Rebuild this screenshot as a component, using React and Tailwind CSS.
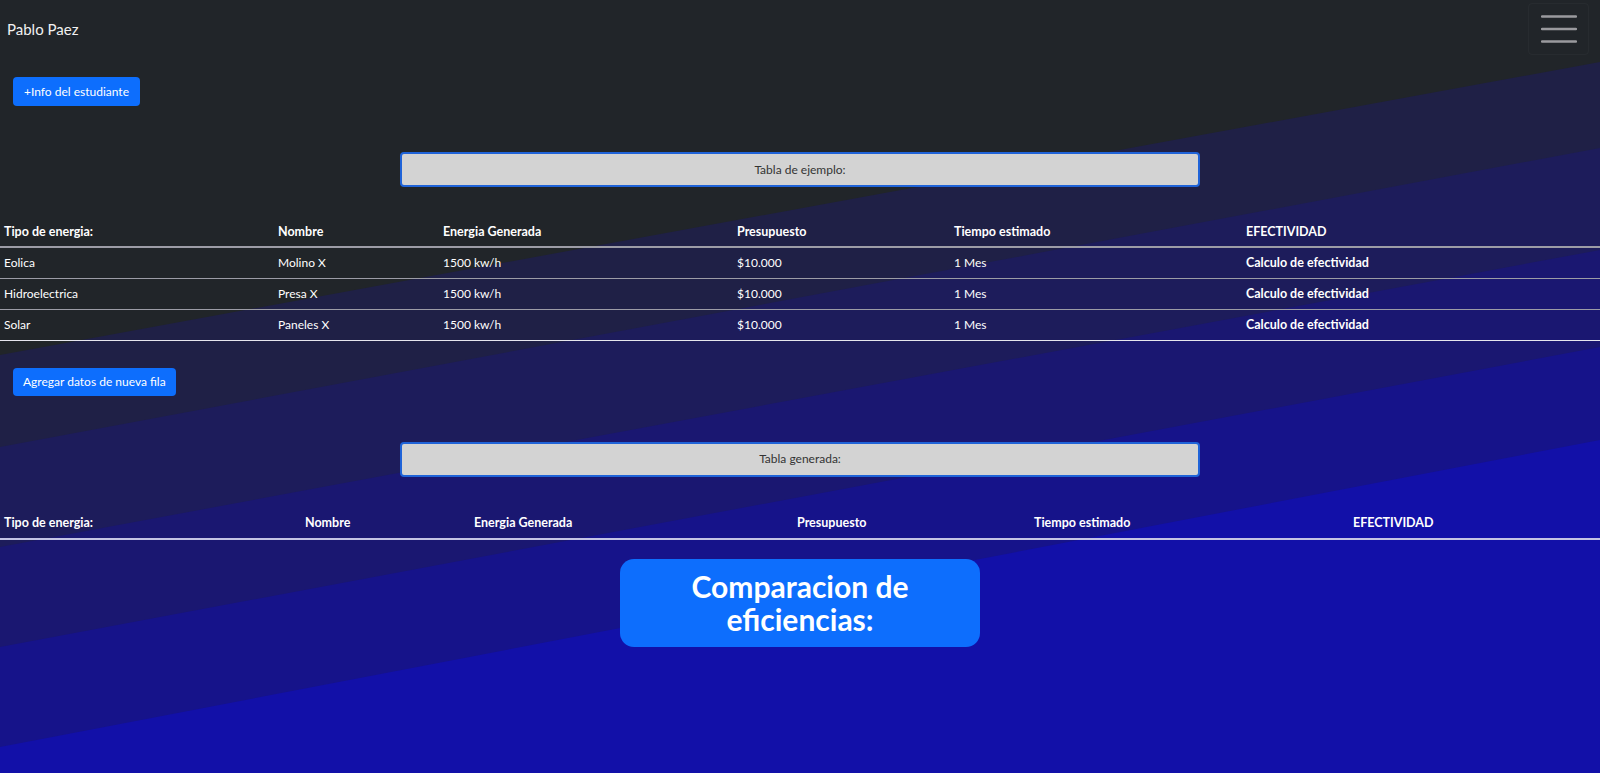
import React from "react";

// rows of the example table
const rows = [
  { tipo: "Eolica", nombre: "Molino X", energia: "1500 kw/h", presupuesto: "$10.000", tiempo: "1 Mes" },
  { tipo: "Hidroelectrica", nombre: "Presa X", energia: "1500 kw/h", presupuesto: "$10.000", tiempo: "1 Mes" },
  { tipo: "Solar", nombre: "Paneles X", energia: "1500 kw/h", presupuesto: "$10.000", tiempo: "1 Mes" },
];

const headers = ["Tipo de energia:", "Nombre", "Energia Generada", "Presupuesto", "Tiempo estimado", "EFECTIVIDAD"];

/*
Layered diagonal background (stepped bands from dark grey to blue)
*/
function Background() {
  return (
    <svg
      className="absolute inset-0 w-full h-full"
      viewBox="0 0 1600 773"
      preserveAspectRatio="none"
    >
      <rect width="1600" height="773" fill="#212529" />
      <polygon points="0,355 1600,62 1600,773 0,773" fill="#1f2046" />
      <polygon points="0,447 1600,148 1600,773 0,773" fill="#1d1c5b" />
      <polygon points="0,547 1600,250 1600,773 0,773" fill="#1a1771" />
      <polygon points="0,647 1600,347 1600,773 0,773" fill="#16138a" />
      <polygon points="0,747 1600,440 1600,773 0,773" fill="#1210a8" />
    </svg>
  );
}

function Hamburger() {
  return (
    <button className="w-[61px] h-[52px] mr-[11px] flex items-center justify-center rounded border border-white/[0.03]">
      <svg width="36" height="28" viewBox="0 0 36 28">
        <line x1="1" y1="1.5" x2="35" y2="1.5" stroke="#9a9a9e" strokeWidth="2.4" strokeLinecap="round" />
        <line x1="1" y1="14" x2="35" y2="14" stroke="#9a9a9e" strokeWidth="2.4" strokeLinecap="round" />
        <line x1="1" y1="26.5" x2="35" y2="26.5" stroke="#9a9a9e" strokeWidth="2.4" strokeLinecap="round" />
      </svg>
    </button>
  );
}

function TitleBox({ children }) {
  return (
    <div className="w-[800px] h-[35px] mx-auto flex items-center justify-center bg-[#d3d3d3] border-2 border-[#1f63d8] rounded-[4px] text-[12px] text-[#333]">
      {children}
    </div>
  );
}

function App() {
  const cell = (last) =>
    "h-[31px] px-1 align-middle leading-[18px] border-b " + (last ? "border-[#e6e6ee]" : "border-[#9c9ca6]");

  return (
    <div className="relative min-h-screen overflow-hidden font-['Lato',sans-serif] text-white">

      <Background />

      <div className="relative">

        {/* NAVBAR */}
        <div className="h-[58px] flex items-center justify-between pl-[7px]">
          <span className="text-[15px] text-[#f1f1f1]">Pablo Paez</span>
          <Hamburger />
        </div>

        <button className="mt-[19px] ml-[13px] h-[29px] px-[11px] rounded-[4px] bg-[#0d6efd] text-[12px] text-white">
          +Info del estudiante
        </button>

        <div className="mt-[46px]">
          <TitleBox>Tabla de ejemplo:</TitleBox>
        </div>

        {/* EXAMPLE TABLE */}
        <table className="mt-[31px] w-full table-fixed text-[12px]">
          <colgroup>
            <col className="w-[274px]" />
            <col className="w-[165px]" />
            <col className="w-[294px]" />
            <col className="w-[217px]" />
            <col className="w-[292px]" />
            <col />
          </colgroup>
          <thead>
            <tr>
              {headers.map((h) => (
                <th key={h} className="h-[29px] px-1 text-left text-[12.5px] leading-[18px] font-bold align-middle border-b-2 border-[#9c9ca6]">
                  {h}
                </th>
              ))}
            </tr>
          </thead>
          <tbody>
            {rows.map((r, i) => {
              const last = i === rows.length - 1;
              return (
                <tr key={r.tipo}>
                  <td className={cell(last)}>{r.tipo}</td>
                  <td className={cell(last)}>{r.nombre}</td>
                  <td className={cell(last)}>{r.energia}</td>
                  <td className={cell(last)}>{r.presupuesto}</td>
                  <td className={cell(last)}>{r.tiempo}</td>
                  <td className={cell(last) + " font-bold text-[12.5px]"}>Calculo de efectividad</td>
                </tr>
              );
            })}
          </tbody>
        </table>

        <button className="mt-[27px] ml-[13px] h-[28px] px-[10px] rounded-[4px] bg-[#0d6efd] text-[12px] text-white">
          Agregar datos de nueva fila
        </button>

        <div className="mt-[46px]">
          <TitleBox>Tabla generada:</TitleBox>
        </div>

        {/* GENERATED TABLE (empty) */}
        <table className="mt-[32px] w-full table-fixed">
          <colgroup>
            <col className="w-[301px]" />
            <col className="w-[169px]" />
            <col className="w-[323px]" />
            <col className="w-[237px]" />
            <col className="w-[319px]" />
            <col />
          </colgroup>
          <thead>
            <tr>
              {headers.map((h) => (
                <th key={h} className="h-[30px] px-1 text-left text-[12.5px] leading-[18px] font-bold align-middle border-b-2 border-[#c4c4e4]">
                  {h}
                </th>
              ))}
            </tr>
          </thead>
          <tbody></tbody>
        </table>

        <div className="mt-[19px] mx-auto w-[360px] h-[88px] rounded-[14px] bg-[#0d6efd] flex flex-col items-center justify-center text-center">
          <h2 className="text-[30px] leading-[33px] font-bold text-white">Comparacion de</h2>
          <h2 className="text-[30px] leading-[33px] font-bold text-white">eficiencias:</h2>
        </div>

      </div>
    </div>
  );
}

export default App;
